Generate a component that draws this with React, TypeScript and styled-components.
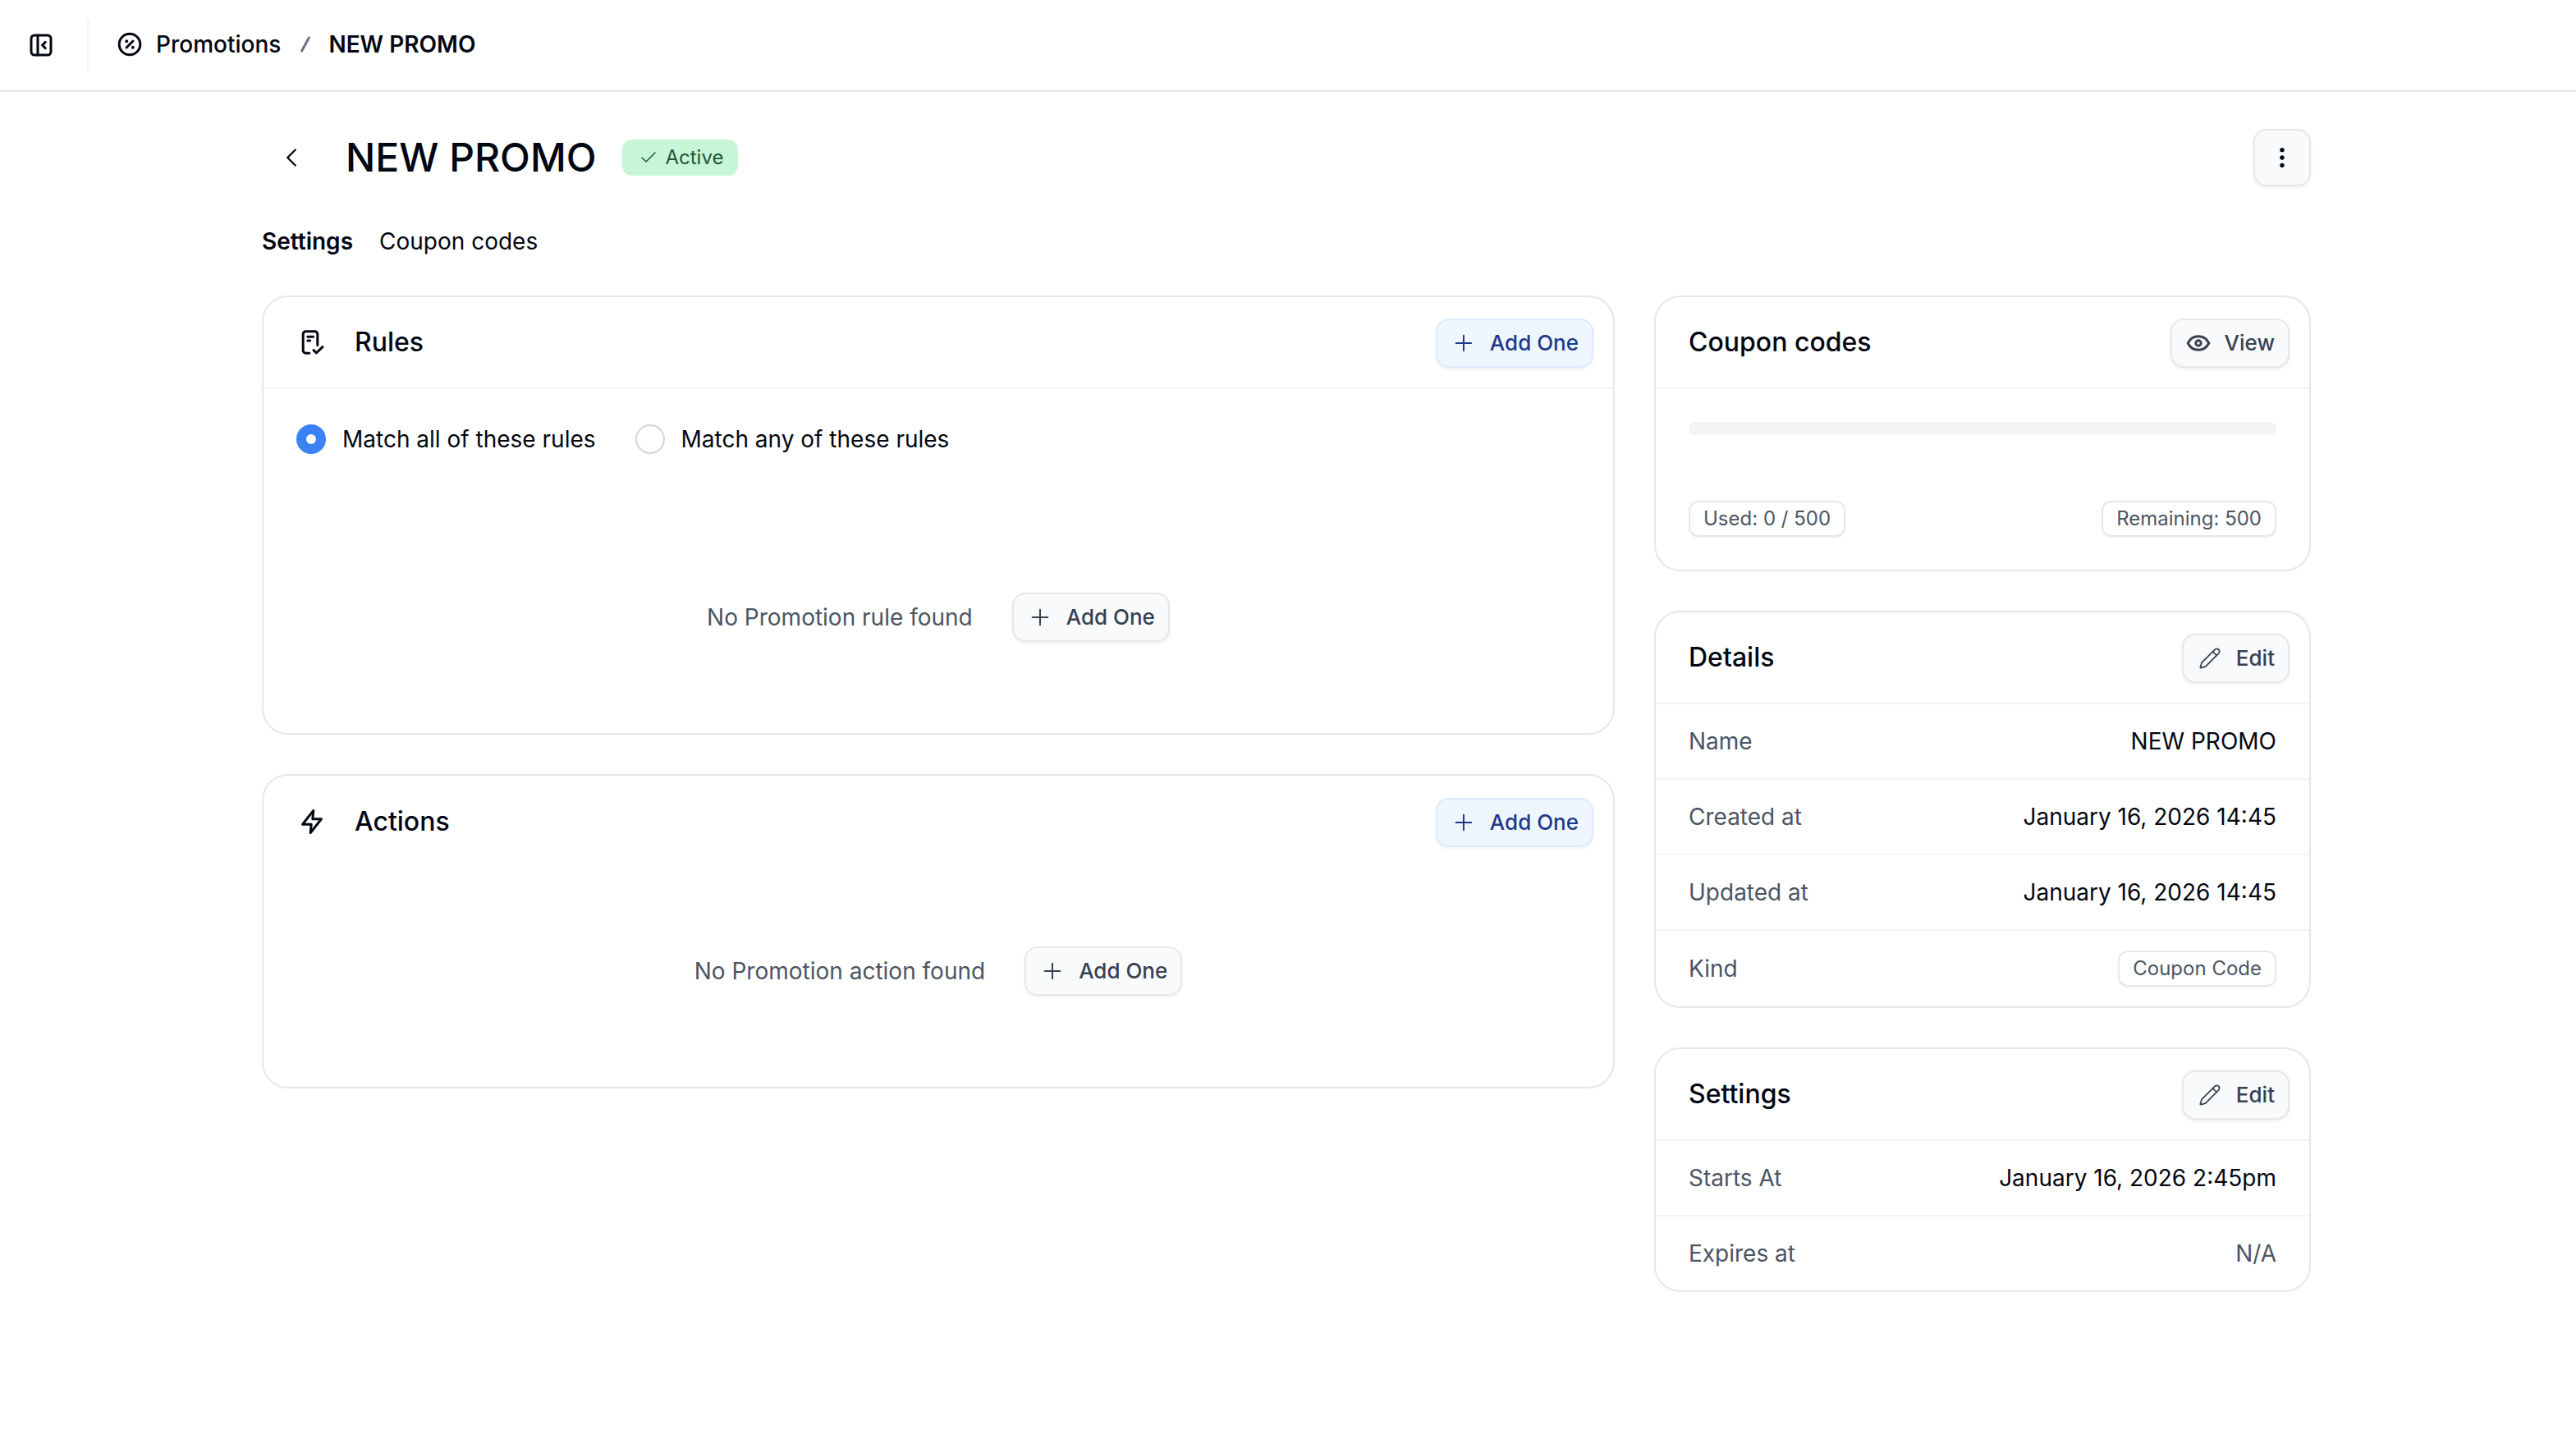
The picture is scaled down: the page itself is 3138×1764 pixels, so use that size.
import React from "react";
import styled, {createGlobalStyle} from "styled-components";
import {Check, ChevronLeft, EllipsisVertical, Pencil, Plus} from "lucide-react";

const GlobalStyle = createGlobalStyle`
  html, body {
    margin: 0;
    padding: 0;
    background: #fff;
  }

  body {
    font-family: Inter, "Liberation Sans", sans-serif;
    font-size: 14px;
    line-height: 20px;
    color: #030712;
    -webkit-font-smoothing: antialiased;
  }

  #root {
    zoom: 2;
    width: 1569px;
  }
`

const TopBar = styled.header`
  display: flex;
  align-items: center;
  height: 56px;
  box-sizing: border-box;
  padding-left: 17px;
  border-bottom: 1px solid #e5e7eb;
`

const TopDivider = styled.div`
  width: 1px;
  height: 32px;
  margin: 0 17px 0 20px;
  background: #f3f4f6;
`

const Crumbs = styled.nav`
  display: flex;
  align-items: center;
  gap: 8px;
  font-weight: 500;
  margin-top: -1px;
`

const CrumbSlash = styled.span`
  display: flex;
  margin: 0 -2px 0 -1px;
  color: #6b7280;
`

const CurrentCrumb = styled.span`
  font-weight: 600;
`

const Main = styled.main`
  padding: 23px 161.5px 0 159.5px;
`

const TitleRow = styled.div`
  display: flex;
  align-items: center;
  height: 34px;
`

const BackButton = styled.div`
  display: flex;
  align-items: center;
  justify-content: center;
  width: 34px;
  height: 34px;
  margin: 0 16px 0 1px;
`

const Title = styled.h1`
  margin: 0 16px 0 0;
  font-size: 24px;
  line-height: 32px;
  font-weight: 500;
`

const ActiveBadge = styled.span`
  display: inline-flex;
  align-items: center;
  gap: 4px;
  height: 22px;
  padding: 0 9px 0 10px;
  border-radius: 6px;
  background: #c6f6d5;
  color: #22543d;
  font-size: 12px;
  font-weight: 400;
`

const MenuButton = styled.div`
  display: flex;
  align-items: center;
  justify-content: center;
  box-sizing: border-box;
  width: 35px;
  height: 35px;
  margin-left: auto;
  border: 1px solid #e5e7eb;
  border-radius: 8px;
  background: #f9fafb;
  box-shadow: 0 1px 2px rgba(0, 0, 0, 0.06);
`

const Tabs = styled.div`
  display: flex;
  gap: 16px;
  margin: 24px 0 23px;
`

const Tab = styled.span<{ $active?: boolean }>`
  font-weight: ${p => (p.$active ? 600 : 400)};
`

const Columns = styled.div`
  display: grid;
  grid-template-columns: 1fr 400px;
  gap: 24px;
  align-items: start;
`

const Stack = styled.div`
  display: flex;
  flex-direction: column;
  gap: 24px;
`

const Card = styled.section`
  box-sizing: border-box;
  border: 1px solid #e5e7eb;
  border-radius: 16px;
  background: #fff;
`

const CardHeader = styled.div<{ $plain?: boolean }>`
  display: flex;
  align-items: center;
  justify-content: space-between;
  box-sizing: border-box;
  height: 56px;
  padding: 1px 12px 0 20px;
  border-bottom: ${p => (p.$plain ? "none" : "1px solid #f3f4f6")};
`

const CardTitle = styled.h2`
  display: flex;
  align-items: center;
  gap: 18px;
  margin: -1px 0 0;
  font-size: 16px;
  line-height: 24px;
  font-weight: 500;

  & > svg {
    margin-left: 1.5px;
  }
`

const Button = styled.div<{ $primary?: boolean }>`
  display: inline-flex;
  align-items: center;
  gap: 8px;
  box-sizing: border-box;
  height: 30px;
  padding: 0 8px;
  border: 1px solid ${p => (p.$primary ? "#dbeafe" : "#e5e7eb")};
  border-radius: 8px;
  background: ${p => (p.$primary ? "#eff6ff" : "#f9fafb")};
  color: ${p => (p.$primary ? "#1e3a8a" : "#374151")};
  font-size: 13px;
  font-weight: 500;
  box-shadow: 0 1px 2px rgba(0, 0, 0, 0.06);
`

const RadioRow = styled.div`
  display: flex;
  gap: 24px;
  padding: 20.5px 20px 0;
`

const RadioLabel = styled.label`
  display: flex;
  align-items: center;
  gap: 10px;
`

const RadioDot = styled.span<{ $checked?: boolean }>`
  box-sizing: border-box;
  width: 18px;
  height: 18px;
  border-radius: 50%;
  background: #fff;
  border: ${p => (p.$checked ? "6px solid #3b82f6" : "1px solid #d1d5db")};
`

const Empty = styled.div<{ $spaced?: boolean }>`
  display: flex;
  align-items: center;
  justify-content: center;
  gap: 24px;
  padding: ${p => (p.$spaced ? "83.5px" : "48px")} 0 55.5px;
  color: #4b5563;
`

const UsageBody = styled.div`
  display: flex;
  flex-direction: column;
  gap: 40px;
  padding: 20px;
`

const ProgressTrack = styled.div`
  height: 8px;
  border-radius: 4px;
  background: #f3f4f6;
`

const UsageRow = styled.div`
  display: flex;
  justify-content: space-between;
`

const OutlineBadge = styled.span`
  display: inline-flex;
  align-items: center;
  box-sizing: border-box;
  height: 22px;
  padding: 0 8px;
  border: 1px solid #e5e7eb;
  border-radius: 6px;
  color: #4b5563;
  font-size: 12px;
  font-weight: 400;
  box-shadow: 0 1px 1px rgba(0, 0, 0, 0.04);
`

const InfoRow = styled.div<{ $tall?: boolean }>`
  display: flex;
  align-items: center;
  justify-content: space-between;
  box-sizing: border-box;
  height: 46px;
  padding: 0 20px;
  color: #4b5563;
  border-bottom: 1px solid #f3f4f6;

  &:last-child {
    height: ${p => (p.$tall ? 46 : 45)}px;
    border-bottom: none;
  }
`

const InfoValue = styled.span<{ $muted?: boolean }>`
  color: ${p => (p.$muted ? "#4b5563" : "#030712")};
`

const Icon = styled.svg.attrs({
    viewBox: "0 0 16 16",
    width: 16,
    height: 16,
    fill: "none",
    stroke: "currentColor",
    strokeWidth: 1.5,
    strokeLinecap: "round",
    strokeLinejoin: "round",
})`
  flex: none;
`

const SidebarIcon = () => (
    <Icon>
        <rect x="2" y="2" width="12" height="12" rx="2"/>
        <path d="M6 2v12M10.6 6.2 8.8 8l1.8 1.8"/>
    </Icon>
)

const PercentIcon = () => (
    <Icon>
        <circle cx="8" cy="8" r="6.4"/>
        <path d="M10 6 6 10"/>
        <path d="M6.1 6.1h.01M9.9 9.9h.01" strokeWidth={2}/>
    </Icon>
)

const SlashIcon = () => (
    <Icon strokeWidth={1}>
        <path d="M10.2 4 5.8 12"/>
    </Icon>
)

const RulesIcon = () => (
    <Icon>
        <path d="M6.4 14.6H4.2A1.6 1.6 0 0 1 2.6 13V3A1.6 1.6 0 0 1 4.2 1.4h5.6A1.6 1.6 0 0 1 11.4 3V9.8"/>
        <path d="M5.4 4.6h3.4M5.4 7h1.4M9 12.8l1.7 1.7 3.8-3.7"/>
    </Icon>
)

const BoltIcon = () => (
    <Icon>
        <path d="M8.9 1.2 2.3 9.6h5.3l-.5 5.2 6.6-8.4H8.4z"/>
    </Icon>
)

const EyeIcon = () => (
    <Icon>
        <path d="M1.6 8C3 5.2 5.3 3.9 8 3.9S13 5.2 14.4 8C13 10.8 10.7 12.1 8 12.1S3 10.8 1.6 8Z"/>
        <circle cx="8" cy="8" r="1.6"/>
    </Icon>
)

const EditIcon = styled(Pencil)`
  flex: none;
  margin: 0 1px;
`

const AddButton = ({primary}: { primary?: boolean }) => (
    <Button $primary={primary}>
        <Plus size={16} strokeWidth={1.5}/>
        Add One
    </Button>
)

const EditButton = () => (
    <Button>
        <EditIcon size={14} strokeWidth={1.5}/>
        Edit
    </Button>
)

const App = () => {
    return (
        <>
            <GlobalStyle/>
            <TopBar>
                <SidebarIcon/>
                <TopDivider/>
                <Crumbs>
                    <PercentIcon/>
                    <span>Promotions</span>
                    <CrumbSlash><SlashIcon/></CrumbSlash>
                    <CurrentCrumb>NEW PROMO</CurrentCrumb>
                </Crumbs>
            </TopBar>
            <Main>
                <TitleRow>
                    <BackButton><ChevronLeft size={19} strokeWidth={1.5}/></BackButton>
                    <Title>NEW PROMO</Title>
                    <ActiveBadge><Check size={12} strokeWidth={1.5}/>Active</ActiveBadge>
                    <MenuButton><EllipsisVertical size={16} strokeWidth={2}/></MenuButton>
                </TitleRow>
                <Tabs>
                    <Tab $active>Settings</Tab>
                    <Tab>Coupon codes</Tab>
                </Tabs>
                <Columns>
                    <Stack>
                        <Card>
                            <CardHeader>
                                <CardTitle><RulesIcon/>Rules</CardTitle>
                                <AddButton primary/>
                            </CardHeader>
                            <RadioRow>
                                <RadioLabel><RadioDot $checked/>Match all of these rules</RadioLabel>
                                <RadioLabel><RadioDot/>Match any of these rules</RadioLabel>
                            </RadioRow>
                            <Empty $spaced>
                                No Promotion rule found
                                <AddButton/>
                            </Empty>
                        </Card>
                        <Card>
                            <CardHeader $plain>
                                <CardTitle><BoltIcon/>Actions</CardTitle>
                                <AddButton primary/>
                            </CardHeader>
                            <Empty>
                                No Promotion action found
                                <AddButton/>
                            </Empty>
                        </Card>
                    </Stack>
                    <Stack>
                        <Card>
                            <CardHeader>
                                <CardTitle>Coupon codes</CardTitle>
                                <Button><EyeIcon/>View</Button>
                            </CardHeader>
                            <UsageBody>
                                <ProgressTrack/>
                                <UsageRow>
                                    <OutlineBadge>Used: 0 / 500</OutlineBadge>
                                    <OutlineBadge>Remaining: 500</OutlineBadge>
                                </UsageRow>
                            </UsageBody>
                        </Card>
                        <Card>
                            <CardHeader>
                                <CardTitle>Details</CardTitle>
                                <EditButton/>
                            </CardHeader>
                            <InfoRow>Name<InfoValue>NEW PROMO</InfoValue></InfoRow>
                            <InfoRow>Created at<InfoValue>January 16, 2026 14:45</InfoValue></InfoRow>
                            <InfoRow>Updated at<InfoValue>January 16, 2026 14:45</InfoValue></InfoRow>
                            <InfoRow $tall>Kind<OutlineBadge>Coupon Code</OutlineBadge></InfoRow>
                        </Card>
                        <Card>
                            <CardHeader>
                                <CardTitle>Settings</CardTitle>
                                <EditButton/>
                            </CardHeader>
                            <InfoRow>Starts At<InfoValue>January 16, 2026 2:45pm</InfoValue></InfoRow>
                            <InfoRow>Expires at<InfoValue $muted>N/A</InfoValue></InfoRow>
                        </Card>
                    </Stack>
                </Columns>
            </Main>
        </>
    )
}

export default App;
